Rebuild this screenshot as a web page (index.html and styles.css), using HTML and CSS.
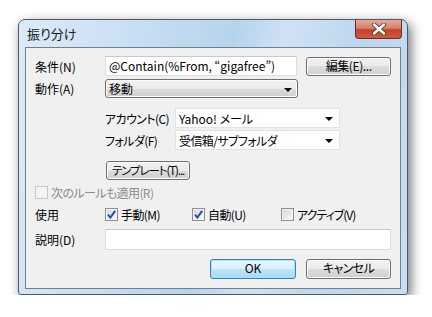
FILE: index.html
```html
<!DOCTYPE html>
<html lang="ja">
<head>
  <meta charset="UTF-8">
  <title>振り分け</title>
  <link rel="stylesheet" href="styles.css">
</head>
<body>
  <div class="window">
    <div class="titlebar">
      <span class="title">振り分け</span>
      <div class="close-btn">
        <svg width="18" height="12" viewBox="0 0 18 12">
          <path d="M4 1.5 L14 10.5 M14 1.5 L4 10.5" stroke="#4a3a3a" stroke-width="4.2" stroke-linecap="round"/>
          <path d="M4 1.5 L14 10.5 M14 1.5 L4 10.5" stroke="#ffffff" stroke-width="2.4" stroke-linecap="round"/>
        </svg>
      </div>
    </div>

    <div class="client">
      <div class="row row-cond">
        <span class="label">条件(N)</span>
        <div class="textbox wide">@Contain(%From, “gigafree”)</div>
        <div class="btn btn-edit">編集(E)...</div>
      </div>

      <div class="row row-action">
        <span class="label">動作(A)</span>
        <div class="combo combo-gray wide">
          <span>移動</span>
          <span class="arrow"></span>
        </div>
      </div>

      <div class="row row-account indent">
        <span class="label tight">アカウント(C)</span>
        <div class="combo combo-white">
          <span>Yahoo! メール</span>
          <span class="arrow"></span>
        </div>
      </div>

      <div class="row row-folder indent">
        <span class="label tight">フォルダ(F)</span>
        <div class="combo combo-white">
          <span class="tight">受信箱/サブフォルダ</span>
          <span class="arrow"></span>
        </div>
      </div>

      <div class="row row-template">
        <span class="label"></span>
        <div class="btn btn-template">テンプレート(T)...</div>
      </div>

      <div class="row row-next disabled">
        <span class="check"></span>
        <span class="tight">次のルールも適用(R)</span>
      </div>

      <div class="row row-use">
        <span class="label">使用</span>
        <div class="check-item manual">
          <span class="check checked"><svg width="11" height="11" viewBox="0 0 11 11"><path d="M2 5.5 L4.3 8.5 L9.2 1.8" stroke="#2a4fa8" stroke-width="2" fill="none"/></svg></span>
          <span class="tight">手動(M)</span>
        </div>
        <div class="check-item auto">
          <span class="check checked"><svg width="11" height="11" viewBox="0 0 11 11"><path d="M2 5.5 L4.3 8.5 L9.2 1.8" stroke="#2a4fa8" stroke-width="2" fill="none"/></svg></span>
          <span class="tight">自動(U)</span>
        </div>
        <div class="check-item">
          <span class="check"></span>
          <span class="tighter">アクティブ(V)</span>
        </div>
      </div>

      <div class="row row-desc">
        <span class="label">説明(D)</span>
        <div class="textbox full"></div>
      </div>

      <div class="row row-buttons">
        <div class="btn btn-ok">OK</div>
        <div class="btn btn-cancel">キャンセル</div>
      </div>
    </div>
  </div>
</body>
</html>
```

FILE: styles.css
```css
body {
  margin: 0;
  background: #ffffff;
  font-family: "Noto Sans CJK JP", "Noto Sans", sans-serif;
  font-size: 12px;
  font-feature-settings: "palt";
  color: #000000;
}
.window {
  margin: 19px 0 0 18px;
  width: 388px;
  height: 274px;
  border: 1px solid #4f5966;
  border-radius: 7px 7px 3px 3px;
  background: linear-gradient(100deg, #dcebf8 0%, #c6ddf2 30%, #b6d3ee 50%, #cfe2f4 62%, #bcd6ee 80%, #c9def2 100%);
  box-shadow: 3px 4px 12px rgba(0, 0, 0, 0.55);
}
.titlebar {
  height: 27px;
  display: flex;
  justify-content: space-between;
  align-items: flex-start;
}
.title {
  margin: 6px 0 0 8px;
  line-height: 16px;
  font-size: 13px;
  color: #1a1a1a;
}
.close-btn {
  width: 45px;
  height: 18px;
  margin-right: 5px;
  border: 1px solid #6b2d24;
  border-top: none;
  border-radius: 0 0 4px 4px;
  background: linear-gradient(#e7aa9c 0%, #d9806c 45%, #c0432c 55%, #d35a3c 100%);
  display: flex;
  align-items: center;
  justify-content: center;
}
.client {
  margin: 0 6px 0 6px;
  height: 240px;
  border: 1px solid #6f7f90;
  background: #f0f0f0;
  padding: 0 9px 0 9px;
}
.row {
  display: flex;
  align-items: center;
  line-height: 15px;
  white-space: nowrap;
}
.label {
  width: 70px;
  flex: none;
}
.tight { letter-spacing: -0.6px; }
.tighter { letter-spacing: -1px; }
.indent {
  padding-left: 70px;
}
.row-cond { margin-top: 8px; height: 20px; }
.row-action { margin-top: 3px; height: 19px; }
.row-account { margin-top: 10px; height: 20px; }
.row-folder { margin-top: 2px; height: 20px; }
.row-template { margin-top: 11px; height: 19px; }
.row-next { margin-top: 5px; height: 14px; }
.row-use { margin-top: 8px; height: 14px; }
.row-desc { margin-top: 8px; height: 21px; }
.row-buttons { margin-top: 9px; height: 20px; justify-content: flex-end; gap: 10px; }

.textbox {
  box-sizing: border-box;
  height: 100%;
  background: #ffffff;
  border: 1px solid #dddddd;
  border-top-color: #c9c9c9;
  padding: 1px 3px;
  line-height: 16px;
}
.wide { width: 193px; }
.full { width: 287px; }

.btn {
  box-sizing: border-box;
  height: 19px;
  border: 1px solid #707070;
  border-radius: 3px;
  background: linear-gradient(#f2f2f2 0%, #ebebeb 50%, #dddddd 50%, #cfcfcf 100%);
  box-shadow: inset 0 0 0 1px #fcfcfc;
  text-align: center;
  line-height: 16px;
}
.btn-edit { width: 85px; margin-left: 9px; letter-spacing: -0.4px; }
.btn-template {
  width: 84px;
  margin-left: 1px;
  font-size: 11.5px;
  letter-spacing: -1.1px;
}
.btn-ok {
  width: 86px;
  height: 20px;
  border-color: #3c7fb1;
  background: linear-gradient(#eaf6fd 0%, #d9f0fc 50%, #bee6fd 50%, #a7d9f5 100%);
  box-shadow: inset 0 0 0 1px #aee0f8;
}
.btn-cancel { width: 85px; height: 20px; letter-spacing: -0.6px; }

.combo {
  box-sizing: border-box;
  height: 100%;
  display: flex;
  align-items: center;
  justify-content: space-between;
  padding: 0 5px 0 3px;
}
.combo-gray {
  border: 1px solid #707070;
  border-radius: 3px;
  background: linear-gradient(#f2f2f2 0%, #ebebeb 50%, #dddddd 50%, #cfcfcf 100%);
  box-shadow: inset 0 0 0 1px #fcfcfc;
}
.combo-white {
  width: 165px;
  background: #ffffff;
  border: 1px solid #e2e2e2;
  padding-right: 6px;
}
.arrow {
  width: 0;
  height: 0;
  border-left: 4px solid transparent;
  border-right: 4px solid transparent;
  border-top: 4px solid #000000;
  margin-top: 2px;
}

.check {
  box-sizing: border-box;
  width: 13px;
  height: 13px;
  border: 1px solid #8e8f8f;
  background: linear-gradient(135deg, #d2d4d6 0%, #f4f4f4 80%);
  box-shadow: inset 0 0 0 1px #f4f4f4;
  display: inline-flex;
  align-items: center;
  justify-content: center;
  margin-right: 3px;
  flex: none;
}
.check svg { display: block; }
.check-item {
  display: flex;
  align-items: center;
}
.manual { width: 87px; }
.auto { width: 89px; }
.disabled { color: #8c8c8c; }
.disabled .check {
  border-color: #c8c8c8;
  background: #f4f4f4;
  box-shadow: none;
}
```
